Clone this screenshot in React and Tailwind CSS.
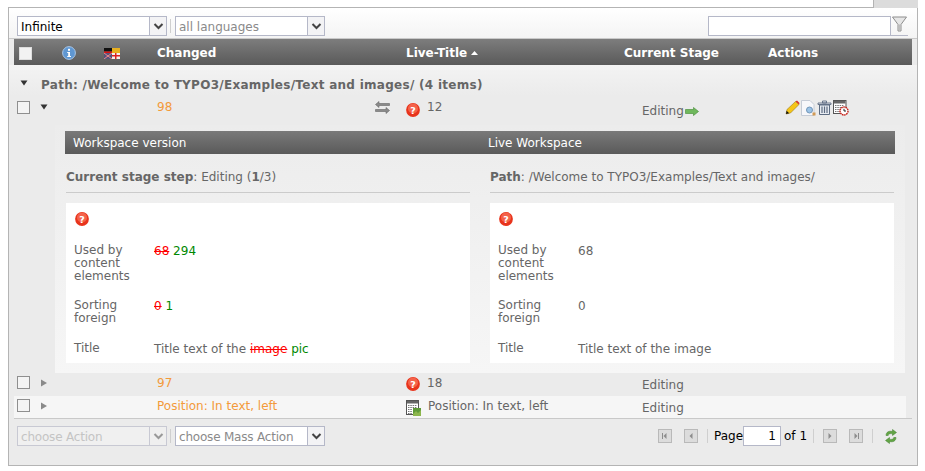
import React from 'react';

const Caret = ({ disabled }) => (
  <svg width="11" height="7" viewBox="0 0 11 7" className={disabled ? 'opacity-50' : ''}>
    <path d="M1.5 1 L5.5 5 L9.5 1" fill="none" stroke="#444" strokeWidth="2" />
  </svg>
);

const Combo = ({ value, muted, disabled, tight }) => (
  <div className={`flex w-[150px] h-5 border ${disabled ? 'border-[#c8c9d3] bg-[#f0f0f0]' : 'border-[#b5b8c8] bg-white'}`}>
    <div className={`flex-1 pl-[3px] text-[12px] leading-[20px] overflow-hidden whitespace-nowrap ${tight ? 'tracking-[-0.2px]' : ''} ${disabled ? 'text-[#c4c4c4]' : muted ? 'text-[#8a8a8a]' : 'text-black'}`}>
      {value}
    </div>
    <div className={`w-[17px] flex items-center justify-center border-l ${disabled ? 'border-[#c8c9d3] bg-[#efefef]' : 'border-[#b5b8c8] bg-[#f3f3f5]'}`}>
      <Caret disabled={disabled} />
    </div>
  </div>
);

const Separator = () => <div className="w-px h-[14px] bg-[#cfcfcf]" />;

const Checkbox = ({ header }) => (
  <div className={`w-[13px] h-[13px] border ${header ? 'border-[#ddd] bg-[#f2f2f2]' : 'border-[#8f8f8f] bg-[#f4f4f4]'}`} />
);

const QuestionIcon = () => (
  <svg width="14" height="14" viewBox="0 0 14 14" className="shrink-0">
    <circle cx="7" cy="7" r="6.9" fill="#e8341c" />
    <circle cx="7" cy="5.5" r="5" fill="#f4624a" />
    <text x="7" y="10.5" textAnchor="middle" fontSize="9.5" fontWeight="700" fill="#fff" fontFamily="'DejaVu Sans', sans-serif">?</text>
  </svg>
);

const InfoIcon = () => (
  <svg width="14" height="14" viewBox="0 0 14 14">
    <circle cx="7" cy="7" r="6.4" fill="#5f97d2" stroke="#a9c6e6" strokeWidth="1" />
    <rect x="6" y="2.8" width="2" height="2" fill="#fff" />
    <path d="M5.2 6 H8 V10 H9 V11 H5.2 V10 H6.2 V7 H5.2 Z" fill="#fff" />
  </svg>
);

const FlagIcon = () => (
  <svg width="16" height="11" viewBox="0 0 16 11">
    <rect x="0" y="0" width="8" height="3.5" fill="#111" />
    <rect x="0" y="3.5" width="8" height="1.5" fill="#d11" />
    <rect x="8" y="0" width="8" height="5" fill="#e8b020" />
    <rect x="0" y="5" width="8" height="6" fill="#55527c" />
    <path d="M0 5 L8 11 M8 5 L0 11" stroke="#e88" strokeWidth="1" />
    <rect x="8" y="5" width="8" height="6" fill="#f4f0f0" />
    <rect x="11" y="5" width="1.5" height="6" fill="#d22" />
    <rect x="8" y="7" width="8" height="1.5" fill="#d22" />
  </svg>
);

const SwapIcon = () => (
  <svg width="15" height="13" viewBox="0 0 15 13">
    <path d="M4 0.5 L0.5 3.5 L4 6.5 V4.5 H14.5 V2.5 H4 Z" fill="#8a8a8a" stroke="#666" strokeWidth="0.6" />
    <path d="M11 6.5 L14.5 9.5 L11 12.5 V10.5 H0.5 V8.5 H11 Z" fill="#8a8a8a" stroke="#666" strokeWidth="0.6" />
  </svg>
);

const ArrowIcon = () => (
  <svg width="14" height="9" viewBox="0 0 14 9" className="ml-px">
    <path d="M0.5 2.5 H8.5 V0.5 L13.5 4.5 L8.5 8.5 V6.5 H0.5 Z" fill="#6fb85c" stroke="#4f9440" strokeWidth="0.7" />
  </svg>
);

const PencilIcon = () => (
  <svg width="15" height="15" viewBox="0 0 15 15">
    <path d="M1 14 L2 9.5 L10.5 1.5 L14 4.5 L5.5 13 Z" fill="#f5c518" stroke="#8a6a10" strokeWidth="0.5" />
    <path d="M10.5 1.5 L12 0.5 L14.5 3 L14 4.5 Z" fill="#d9342a" />
    <path d="M1 14 L1.6 10.8 L4.2 13.2 Z" fill="#111" />
  </svg>
);

const PreviewIcon = () => (
  <svg width="15" height="16" viewBox="0 0 15 16">
    <path d="M0.5 0.5 H9 L13 4.5 V15.5 H0.5 Z" fill="#f7f7fa" stroke="#c6ccd6" />
    <circle cx="8.5" cy="10" r="3" fill="#9cc3e6" stroke="#7396b8" />
    <rect x="11.5" y="12.5" width="3" height="3" fill="#d19a55" />
  </svg>
);

const TrashIcon = () => (
  <svg width="15" height="15" viewBox="0 0 15 15">
    <path d="M1 3 H14 V4.5 H1 Z M5.5 1 H9.5 V3 H5.5 Z" fill="#e8ecf2" stroke="#5d6c82" strokeWidth="0.9" />
    <path d="M2.5 5 H12.5 V14.5 H2.5 Z" fill="#e8ecf2" stroke="#5d6c82" />
    <path d="M5 6.5 V13 M7.5 6.5 V13 M10 6.5 V13" stroke="#5d6c82" strokeWidth="1.2" />
  </svg>
);

const ScheduleIcon = () => (
  <svg width="16" height="16" viewBox="0 0 16 16">
    <rect x="0.5" y="0.5" width="12.5" height="13" fill="#fff" stroke="#555" />
    <rect x="1" y="1" width="11.5" height="2.5" fill="#666" />
    <path d="M2 5.5 H11 M2 7.5 H11 M2 9.5 H7 M2 11.5 H7" stroke="#777" strokeDasharray="1.5 0.8" />
    <circle cx="11" cy="11" r="4" fill="#fff" stroke="#c31d14" strokeWidth="1.4" strokeDasharray="1.6 0.6" />
    <path d="M11 8.8 V11 H13" stroke="#222" fill="none" />
  </svg>
);

const ContentIcon = () => (
  <svg width="15" height="16" viewBox="0 0 15 16" className="shrink-0">
    <rect x="0.5" y="0.5" width="12" height="14" fill="#fff" stroke="#555" />
    <rect x="1" y="1" width="11" height="2.5" fill="#666" />
    <path d="M2 5.5 H11 M2 7.5 H11 M2 9.5 H6 M2 11.5 H6 M2 13.5 H6" stroke="#777" strokeDasharray="1.5 0.8" />
    <rect x="7" y="8" width="8" height="8" fill="#5e9a38" />
    <path d="M7 14 L10 11 L12 13 L15 10 V16 H7 Z" fill="#8cb64c" />
  </svg>
);

const FilterIcon = () => (
  <svg width="15" height="17" viewBox="0 0 15 17">
    <path d="M0.5 1 H14.5 L9 8.5 V15 H6 V8.5 Z" fill="#e6e6e6" stroke="#8d8d8d" />
    <path d="M6.5 8.5 H8.5 V14.5 H6.5 Z" fill="#bdbdbd" />
  </svg>
);

const RefreshIcon = () => (
  <svg width="12" height="15" viewBox="0 0 12 15">
    <path d="M1 6.5 C1 3 4 1.5 7.5 2.5 L7.5 0.5 L11.5 3.5 L7.5 6.5 L7.5 4.8 C5 4.2 3.5 5 3.2 6.5 Z" fill="#62a544" stroke="#3f7d2c" strokeWidth="0.5" />
    <path d="M11 8.5 C11 12 8 13.5 4.5 12.5 L4.5 14.5 L0.5 11.5 L4.5 8.5 L4.5 10.2 C7 10.8 8.5 10 8.8 8.5 Z" fill="#62a544" stroke="#3f7d2c" strokeWidth="0.5" />
  </svg>
);

const PagerButton = ({ dir, bar }) => (
  <div className="w-[14px] h-[14px] border border-[#b9b9b9] bg-[#dcdcdc] flex items-center justify-center">
    <svg width="8" height="8" viewBox="0 0 8 8">
      {bar === 'left' && <rect x="1" y="1" width="1" height="6" fill="#8c8c8c" />}
      {bar === 'right' && <rect x="6" y="1" width="1" height="6" fill="#8c8c8c" />}
      <path d={dir === 'left' ? 'M5.5 1 V7 L2.5 4 Z' : 'M2.5 1 V7 L5.5 4 Z'} fill="#8c8c8c" />
    </svg>
  </div>
);

const Toggle = ({ open }) => (
  <svg width="8" height="8" viewBox="0 0 8 8">
    {open ? <path d="M0.5 1.5 H7.5 L4 6.5 Z" fill="#333" /> : <path d="M1 0.5 L7 4 L1 7.5 Z" fill="#8a8a8a" />}
  </svg>
);

const ListRow = ({ open, bg, height, changed, swap, icon, title, stage, arrow, actions }) => (
  <div className={`flex ${bg} text-[12px] text-[#666]`} style={{ height }}>
    <div className={`w-[26px] pl-[3px] ${open ? 'pt-[5px]' : 'pt-[3px]'}`}><Checkbox /></div>
    <div className={`w-[117px] ${open ? 'pt-[7px]' : 'pt-[6px]'}`}><Toggle open={open} /></div>
    <div className={`w-[218px] text-[#f39a3a] leading-[15px] ${open ? 'pt-[4px]' : 'pt-[3px]'}`}>{changed}</div>
    <div className="w-[31px] pt-[5px]">{swap && <SwapIcon />}</div>
    <div className={`w-[236px] flex items-start gap-[7px] leading-[15px] ${open ? 'pt-[4px]' : 'pt-[3px]'}`}>
      <span className={open ? 'mt-[3px]' : 'mt-[1px]'}>{icon}</span>
      <span>{title}</span>
    </div>
    <div className={`w-[143px] flex items-start leading-[15px] ${open ? 'pt-[8px]' : 'pt-[5px]'}`}>
      {stage}
      {arrow && <span className="mt-[3px]"><ArrowIcon /></span>}
    </div>
    {actions && (
      <div className="flex items-start gap-[1px] pt-[4px]">
        <PencilIcon />
        <PreviewIcon />
        <TrashIcon />
        <ScheduleIcon />
      </div>
    )}
  </div>
);

const Field = ({ label, children, className }) => (
  <div className={`flex text-[12px] leading-[13px] text-[#666] ${className}`}>
    <div className="w-[80px] shrink-0">{label}</div>
    <div className="mt-[1px]">{children}</div>
  </div>
);

const Del = ({ children }) => <span className="text-[#f00] line-through">{children}</span>;
const Ins = ({ children }) => <span className="text-[#080]">{children}</span>;

const CompareColumn = ({ heading, used, sorting, title }) => (
  <div className="w-[404px]">
    <div className="h-[39px] pt-[16px] border-b border-[#cbcbcb] text-[12px] leading-[15px] text-[#666]">{heading}</div>
    <div className="mt-[10px] h-[160px] bg-white pl-[8px] pt-[9px]">
      <div className="ml-px"><QuestionIcon /></div>
      <Field label={<>Used by<br />content<br />elements</>} className="mt-[18px]">{used}</Field>
      <Field label={<>Sorting<br />foreign</>} className="mt-[16px]">{sorting}</Field>
      <Field label="Title" className="mt-[17px]">{title}</Field>
    </div>
  </div>
);

const DetailPanel = () => (
  <div className="ml-[41px] mr-[7px] h-[248px] bg-gradient-to-b from-[#ececec] to-[#f6f6f6] pt-[6px] pl-[10px] pr-[10px]">
    <div className="h-[23px] flex items-center bg-gradient-to-b from-[#7a7a7a] to-[#5a5a5a] text-[12px] text-white">
      <div className="w-[423px] pl-[8px]">Workspace version</div>
      <div>Live Workspace</div>
    </div>
    <div className="flex gap-[20px] pl-[1px]">
      <CompareColumn
        heading={<><b>Current stage step</b>: Editing (<b>1</b>/3)</>}
        used={<><Del>68</Del> <Ins>294</Ins></>}
        sorting={<><Del>0</Del> <Ins>1</Ins></>}
        title={<>Title text of the <Del>image</Del> <Ins>pic</Ins></>}
      />
      <CompareColumn
        heading={<><b>Path</b>: /Welcome to TYPO3/Examples/Text and images/</>}
        used="68"
        sorting="0"
        title="Title text of the image"
      />
    </div>
  </div>
);

export default function App() {
  return (
    <div className="w-[925px] h-[471px] bg-white pt-[7px] pl-[8px] font-['DejaVu_Sans',Verdana,sans-serif] overflow-hidden">
      <div className="w-[910px] h-[459px] border border-[#b4b4b4] relative flex flex-col bg-[#ebebeb]">
        {/* Corner of the next tab */}
        <div className="absolute right-[-1px] top-[-8px] w-[45px] h-[8px] bg-[#dcdcdc] border-l border-[#b4b4b4]" />

        {/* Filter bar */}
        <div className="h-[31px] bg-gradient-to-b from-white to-[#f4f4f4] flex items-start pt-[8px] pl-[8px] pr-[9px] border-b border-[#c9c9c9]">
          <Combo value="Infinite" />
          <div className="ml-[3px] mr-[4px] mt-[3px]"><Separator /></div>
          <Combo value="all languages" muted />
          <div className="ml-auto flex items-start">
            <div className="w-[183px] h-5 border border-[#b5b8c8] bg-white" />
            <div className="w-[17px] h-5 pl-[1px] border-b border-[#b5b8c8]"><FilterIcon /></div>
          </div>
        </div>

        {/* Grid header */}
        <div className="mx-[5px] h-[26px] pt-[2px] flex items-center bg-gradient-to-b from-[#7d7d7d] to-[#5a5a5a] text-[12px] font-bold text-white">
          <div className="w-[48px] pl-[5px]"><Checkbox header /></div>
          <div className="w-[42px]"><InfoIcon /></div>
          <div className="w-[53px]"><FlagIcon /></div>
          <div className="w-[249px]">Changed</div>
          <div className="w-[218px] flex items-center gap-[4px]">
            Live-Title
            <svg width="7" height="4" viewBox="0 0 7 4"><path d="M0 4 L3.5 0 L7 4 Z" fill="#fff" /></svg>
          </div>
          <div className="w-[144px]">Current Stage</div>
          <div>Actions</div>
        </div>

        {/* Group heading */}
        <div className="h-[31px] bg-gradient-to-b from-[#f3f3f3] to-[#ebebeb] flex items-start pl-[11px] pt-[13px] text-[12px] font-bold tracking-[0.28px] text-[#666] leading-[14px]">
          <div className="w-[21px] pt-[1px]"><Toggle open /></div>
          Path: /Welcome to TYPO3/Examples/Text and images/ (4 items)
        </div>

        {/* Rows */}
        <div className="mx-[5px] border-b border-[#c9c9c9]">
          <ListRow open bg="bg-[#ebebeb]" height={29} changed="98" swap icon={<QuestionIcon />} title="12" stage="Editing" arrow actions />
          <DetailPanel />
          <ListRow bg="bg-[#ebebeb]" height={23} changed="97" icon={<QuestionIcon />} title="18" stage="Editing" />
          <ListRow bg="bg-[#f6f6f6] mr-[6px]" height={22} changed="Position: In text, left" icon={<ContentIcon />} title="Position: In text, left" stage="Editing" />
        </div>

        {/* Footer toolbar */}
        <div className="flex-1 flex items-start pt-[7px] pl-[8px] pr-[20px] text-[12px] text-black">
          <Combo value="choose Action" disabled tight />
          <div className="ml-[3px] mr-[4px] mt-[3px]"><Separator /></div>
          <Combo value="choose Mass Action" muted tight />
          <div className="ml-auto flex items-center h-5">
            <PagerButton dir="left" bar="left" />
            <div className="w-[12px]" />
            <PagerButton dir="left" />
            <div className="ml-[9px] mr-[6px]"><Separator /></div>
            <span className="w-[26px] whitespace-nowrap">Page</span>
            <div className="w-[38px] h-5 mx-[3px] border border-[#b5b8c8] bg-white text-right pr-[4px] leading-[18px]">1</div>
            <span className="w-[22px] whitespace-nowrap">of 1</span>
            <div className="ml-[7px] mr-[9px]"><Separator /></div>
            <PagerButton dir="right" />
            <div className="w-[12px]" />
            <PagerButton dir="right" bar="right" />
            <div className="mx-[9px]"><Separator /></div>
            <div className="ml-[3px]"><RefreshIcon /></div>
          </div>
        </div>
      </div>
    </div>
  );
}
